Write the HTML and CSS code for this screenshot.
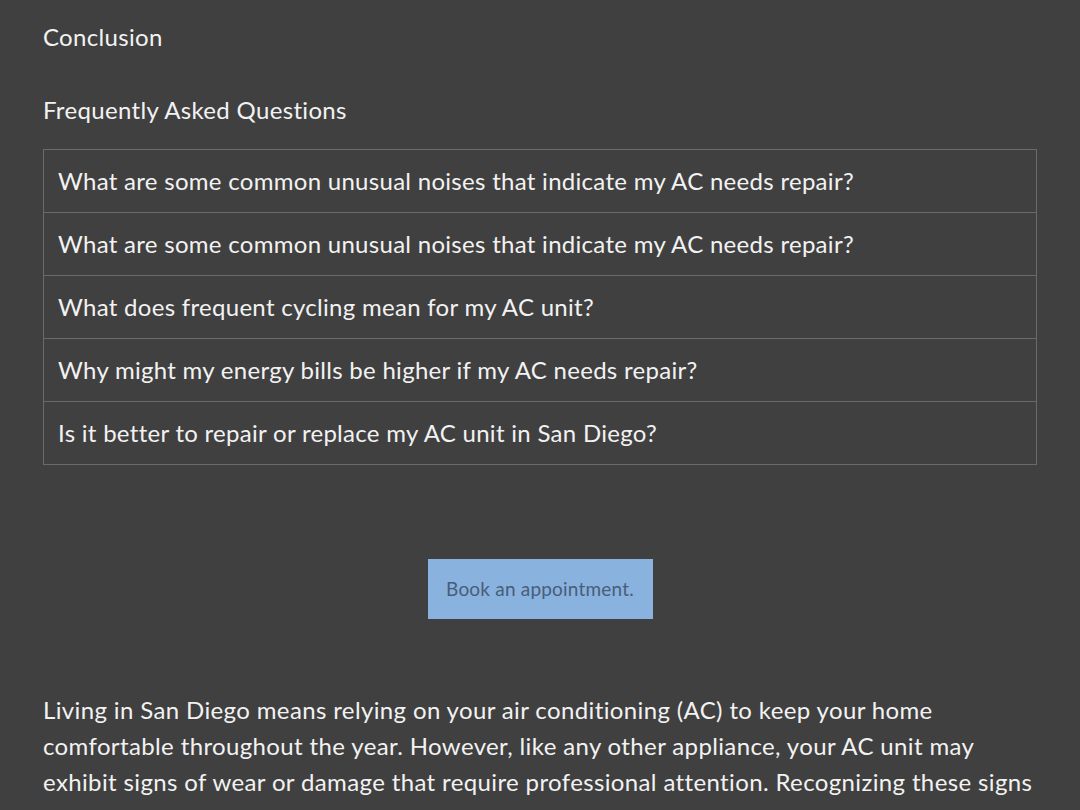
FILE: index.html
```html
<!DOCTYPE html>
<html lang="en">
<head>
<meta charset="UTF-8">
<title>AC Repair San Diego</title>
<link rel="stylesheet" href="styles.css">
</head>
<body>
<div class="page">
  <p class="toc-item">Conclusion</p>
  <p class="toc-item">Frequently Asked Questions</p>

  <div class="faq">
    <div class="faq-row">What are some common unusual noises that indicate my AC needs repair?</div>
    <div class="faq-row">What are some common unusual noises that indicate my AC needs repair?</div>
    <div class="faq-row">What does frequent cycling mean for my AC unit?</div>
    <div class="faq-row">Why might my energy bills be higher if my AC needs repair?</div>
    <div class="faq-row">Is it better to repair or replace my AC unit in San Diego?</div>
  </div>

  <div class="cta">
    <a class="btn" href="#">Book an appointment.</a>
  </div>

  <p class="intro">Living in San Diego means relying on your air conditioning (AC) to keep your home comfortable throughout the year. However, like any other appliance, your AC unit may exhibit signs of wear or damage that require professional attention. Recognizing these signs early can save you from discomfort and costly repairs down the road.</p>
</div>
</body>
</html>
```

FILE: styles.css
```css
html, body {
  margin: 0;
  background: #404040;
}
body {
  color: #f2f2f2;
  font-family: "Lato", "Noto Sans", sans-serif;
  letter-spacing: 0.33px;
}
.page {
  padding: 20px 43px 0 43px;
}
.toc-item {
  margin: 0 0 39px 0;
  font-size: 24px;
  line-height: 34px;
}
.toc-item + .toc-item {
  margin-bottom: 22px;
}
.faq {
  border: 1px solid #6a6a6a;
  border-bottom: none;
}
.faq-row {
  border-bottom: 1px solid #6a6a6a;
  padding: 0 14px;
  height: 62px;
  line-height: 62px;
  font-size: 24px;
  letter-spacing: 0.29px;
}
.cta {
  display: flex;
  justify-content: center;
  padding: 94px 0 73px 0;
}
.btn {
  display: block;
  width: 225px;
  height: 60px;
  line-height: 60px;
  text-align: center;
  background: #8ab2df;
  color: #475e79;
  font-size: 19px;
  letter-spacing: 0.2px;
  text-decoration: none;
}
.intro {
  margin: 0;
  font-size: 24px;
  line-height: 36px;
  letter-spacing: 0.37px;
}
```
